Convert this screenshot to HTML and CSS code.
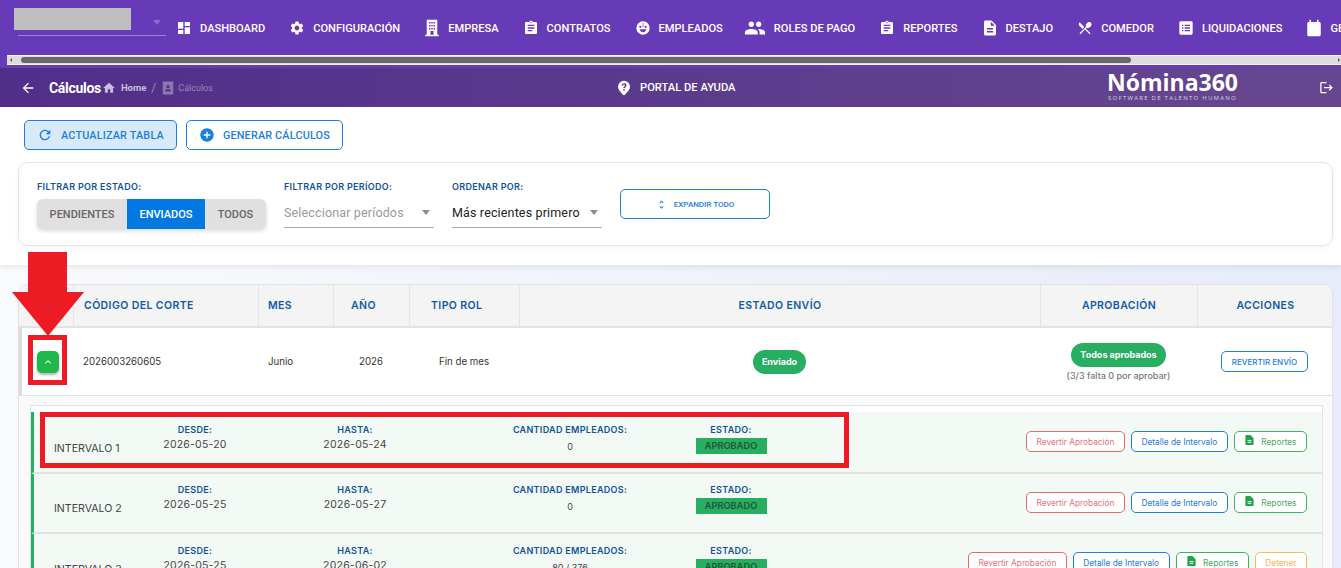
FILE: index.html
```html
<!DOCTYPE html>
<html lang="es">
<head>
<meta charset="UTF-8">
<title>Cálculos</title>
<link rel="stylesheet" href="styles.css">
</head>
<body>
<svg class="defs" width="0" height="0">
	<symbol id="i-dash" viewBox="0 0 24 24"><path d="M3 13h8V3H3v10zm0 8h8v-6H3v6zm10 0h8V11h-8v10zm0-18v6h8V3h-8z"/></symbol>
	<symbol id="i-cog" viewBox="0 0 24 24"><path d="M19.14 12.94c.04-.3.06-.61.06-.94 0-.32-.02-.64-.07-.94l2.03-1.58c.18-.14.23-.41.12-.61l-1.92-3.32c-.12-.22-.37-.29-.59-.22l-2.39.96c-.5-.38-1.03-.7-1.62-.94l-.36-2.54c-.04-.24-.24-.41-.48-.41h-3.84c-.24 0-.43.17-.47.41l-.36 2.54c-.59.24-1.13.57-1.62.94l-2.39-.96c-.22-.08-.47 0-.59.22L2.74 8.87c-.12.21-.08.47.12.61l2.03 1.58c-.05.3-.09.63-.09.94s.02.64.07.94l-2.03 1.58c-.18.14-.23.41-.12.61l1.92 3.32c.12.22.37.29.59.22l2.39-.96c.5.38 1.03.7 1.62.94l.36 2.54c.05.24.24.41.48.41h3.84c.24 0 .44-.17.47-.41l.36-2.54c.59-.24 1.13-.56 1.62-.94l2.39.96c.22.08.47 0 .59-.22l1.92-3.32c.12-.22.07-.47-.12-.61l-2.01-1.58zM12 15.6c-1.98 0-3.6-1.62-3.6-3.6s1.62-3.6 3.6-3.6 3.6 1.62 3.6 3.6-1.62 3.6-3.6 3.6z"/></symbol>
	<symbol id="i-building" viewBox="0 0 24 24"><path fill-rule="evenodd" d="M5 1h14v20h2v2H3v-2h2V1zm3 3v2h2V4H8zm3 0v2h2V4h-2zm3 0v2h2V4h-2zM8 8v2h2V8H8zm3 0v2h2V8h-2zm3 0v2h2V8h-2zM8 12v2h2v-2H8zm3 0v2h2v-2h-2zm3 0v2h2v-2h-2zm-4 4v5h4v-5h-4z"/></symbol>
	<symbol id="i-clip" viewBox="0 0 24 24"><path d="M19 3h-4.18C14.4 1.84 13.3 1 12 1s-2.4.84-2.82 2H5c-1.1 0-2 .9-2 2v14c0 1.1.9 2 2 2h14c1.1 0 2-.9 2-2V5c0-1.1-.9-2-2-2zm-7 0c.55 0 1 .45 1 1s-.45 1-1 1-1-.45-1-1 .45-1 1-1zm2 14H7v-2h7v2zm3-4H7v-2h10v2zm0-4H7V7h10v2z"/></symbol>
	<symbol id="i-face" viewBox="0 0 24 24"><path fill-rule="evenodd" d="M12 2a10 10 0 1 0 0 20 10 10 0 0 0 0-20zM8 8.500a1.700 1.700 0 1 1 0 3.400 1.700 1.700 0 0 1 0-3.400zm8 0a1.700 1.700 0 1 1 0 3.400 1.700 1.700 0 0 1 0-3.400zM12.500 4v7h-1V4h1zM7 14h10c-.6 2.600-2.700 4.500-5 4.500S7.600 16.600 7 14z"/></symbol>
	<symbol id="i-group" viewBox="0 0 24 24"><path d="M16 11c1.660 0 2.990-1.340 2.990-3S17.660 5 16 5c-1.660 0-3 1.340-3 3s1.340 3 3 3zm-8 0c1.660 0 2.990-1.340 2.990-3S9.660 5 8 5C6.340 5 5 6.340 5 8s1.340 3 3 3zm0 2c-2.330 0-7 1.170-7 3.500V19h14v-2.500c0-2.330-4.670-3.500-7-3.500zm8 0c-.29 0-.62.02-.97.05 1.160.84 1.970 1.970 1.970 3.450V19h6v-2.500c0-2.330-4.670-3.500-7-3.500z"/></symbol>
	<symbol id="i-file" viewBox="0 0 24 24"><path d="M14 2H6c-1.100 0-1.990.9-1.990 2L4 20c0 1.100.89 2 1.990 2H18c1.100 0 2-.9 2-2V8l-6-6zm2 16H8v-2h8v2zm0-4H8v-2h8v2zm-3-5V3.500L18.500 9H13z"/></symbol>
	<symbol id="i-food" viewBox="0 0 24 24"><path d="M8.100 13.340l2.830-2.830L3.910 3.500c-1.560 1.560-1.560 4.090 0 5.660l4.190 4.180zm6.780-1.810c1.530.71 3.680.21 5.270-1.380 1.910-1.910 2.280-4.650.81-6.120-1.460-1.460-4.200-1.100-6.120.81-1.590 1.590-2.090 3.740-1.380 5.270L3.700 19.870l1.410 1.410L12 14.410l6.880 6.880 1.410-1.410L13.410 13l1.470-1.470z"/></symbol>
	<symbol id="i-list" viewBox="0 0 24 24"><path fill-rule="evenodd" d="M4 2h16a2 2 0 0 1 2 2v16a2 2 0 0 1-2 2H4a2 2 0 0 1-2-2V4a2 2 0 0 1 2-2zm2 5v2h2V7H6zm4 0v2h8V7h-8zm-4 4v2h2v-2H6zm4 0v2h8v-2h-8zm-4 4v2h2v-2H6zm4 0v2h8v-2h-8z"/></symbol>
	<symbol id="i-cal" viewBox="0 0 24 24"><path d="M19 4h-1V1h-2v3H8V1H6v3H5c-1.100 0-2 .9-2 2v15c0 1.100.9 2 2 2h14c1.100 0 2-.9 2-2V6c0-1.100-.9-2-2-2z"/></symbol>
	<symbol id="i-back" viewBox="0 0 24 24"><path d="M20 11H7.830l5.590-5.590L12 4l-8 8 8 8 1.410-1.410L7.830 13H20v-2z"/></symbol>
	<symbol id="i-home" viewBox="0 0 24 24"><path d="M10 20v-6h4v6h5v-8h3L12 3 2 12h3v8z"/></symbol>
	<symbol id="i-badge" viewBox="0 0 24 24"><path fill-rule="evenodd" d="M4 1h16a1 1 0 0 1 1 1v20a1 1 0 0 1-1 1H4a1 1 0 0 1-1-1V2a1 1 0 0 1 1-1zm8 6a3 3 0 1 0 0 6 3 3 0 0 0 0-6zm-5 11h10v-1.500c0-1.700-3.300-2.500-5-2.500s-5 .8-5 2.500V18z"/></symbol>
	<symbol id="i-help" viewBox="0 0 24 24"><path fill-rule="evenodd" d="M12 1a9 9 0 0 0-9 9c0 6 9 13 9 13s9-7 9-13a9 9 0 0 0-9-9zm-3.500 7.500C8.700 6.500 10.200 5 12.200 5c2 0 3.500 1.300 3.500 3.100 0 2.300-2.600 2.500-2.600 4.400h-2.200c0-2.900 2.500-3 2.500-4.400 0-.7-.6-1.200-1.300-1.200-.8 0-1.400.6-1.500 1.600H8.500zM10.900 14h2.200v2.100h-2.200V14z"/></symbol>
	<symbol id="i-exit" viewBox="0 0 24 24"><path d="M17 7l-1.410 1.410L18.170 11H8v2h10.170l-2.580 2.580L17 17l5-5zM4 5h8V3H4c-1.100 0-2 .9-2 2v14c0 1.100.9 2 2 2h8v-2H4V5z"/></symbol>
	<symbol id="i-refresh" viewBox="0 0 24 24"><path d="M17.650 6.350C16.200 4.900 14.210 4 12 4c-4.420 0-7.990 3.580-7.990 8s3.570 8 7.990 8c3.730 0 6.840-2.550 7.730-6h-2.080c-.82 2.330-3.040 4-5.650 4-3.310 0-6-2.690-6-6s2.690-6 6-6c1.660 0 3.140.69 4.220 1.780L13 11h7V4l-2.350 2.350z"/></symbol>
	<symbol id="i-plus" viewBox="0 0 24 24"><path d="M12 2C6.480 2 2 6.480 2 12s4.480 10 10 10 10-4.480 10-10S17.520 2 12 2zm5 11h-4v4h-2v-4H7v-2h4V7h2v4h4v2z"/></symbol>
	<symbol id="i-unfold" viewBox="0 0 24 24"><path d="M12 5.830L15.170 9l1.410-1.410L12 3 7.410 7.590 8.830 9 12 5.830zm0 12.340L8.830 15l-1.410 1.410L12 21l4.590-4.590L15.170 15 12 18.170z"/></symbol>
	<symbol id="i-up" viewBox="0 0 24 24"><path d="M7.410 15.410L12 10.830l4.590 4.580L18 14l-6-6-6 6z"/></symbol>
	<symbol id="i-sheet" viewBox="0 0 24 24"><path fill-rule="evenodd" d="M14 1H5a2 2 0 0 0-2 2v18a2 2 0 0 0 2 2h14a2 2 0 0 0 2-2V8l-7-7zm-6 11h8v2H8v-2zm0 4h8v2H8v-2z"/></symbol>
</svg>

<!-- barra principal -->
<nav class="topnav">
	<div class="brand">
		<div class="brand-hide"></div>
		<div class="brand-line"></div>
		<span class="brand-arrow"></span>
	</div>
	<a class="nav-item"><svg class="ic"><use href="#i-dash"/></svg>DASHBOARD</a>
	<a class="nav-item"><svg class="ic"><use href="#i-cog"/></svg>CONFIGURACIÓN</a>
	<a class="nav-item"><svg class="ic tall"><use href="#i-building"/></svg>EMPRESA</a>
	<a class="nav-item"><svg class="ic"><use href="#i-clip"/></svg>CONTRATOS</a>
	<a class="nav-item"><svg class="ic"><use href="#i-face"/></svg>EMPLEADOS</a>
	<a class="nav-item"><svg class="ic wide"><use href="#i-group"/></svg>ROLES DE PAGO</a>
	<a class="nav-item"><svg class="ic"><use href="#i-clip"/></svg>REPORTES</a>
	<a class="nav-item"><svg class="ic tall"><use href="#i-file"/></svg>DESTAJO</a>
	<a class="nav-item"><svg class="ic"><use href="#i-food"/></svg>COMEDOR</a>
	<a class="nav-item"><svg class="ic"><use href="#i-list"/></svg>LIQUIDACIONES</a>
	<a class="nav-item"><svg class="ic tall"><use href="#i-cal"/></svg>GESTIÓN</a>
</nav>
<div class="nav-scroll">
	<div class="scroll-track">
		<span class="scroll-left"></span>
		<span class="scroll-thumb"></span>
		<span class="scroll-right"></span>
	</div>
</div>

<!-- encabezado de la pagina -->
<header class="pagehead">
	<div class="crumbs">
		<svg class="back"><use href="#i-back"/></svg>
		<span class="page-title">Cálculos</span>
		<svg class="crumb-ic"><use href="#i-home"/></svg>
		<span class="crumb-home">Home</span>
		<span class="crumb-sep">/</span>
		<svg class="crumb-ic dim"><use href="#i-badge"/></svg>
		<span class="crumb-now">Cálculos</span>
	</div>
	<div class="help"><svg class="ic"><use href="#i-help"/></svg>PORTAL DE AYUDA</div>
	<div class="logo">
		<div class="logo-name">Nómina360</div>
		<div class="logo-sub">SOFTWARE DE TALENTO HUMANO</div>
	</div>
	<svg class="exit"><use href="#i-exit"/></svg>
</header>

<section class="toolbar">
	<div class="tool-btns">
		<button class="btn-main on"><svg class="ic"><use href="#i-refresh"/></svg>ACTUALIZAR TABLA</button>
		<button class="btn-main"><svg class="ic"><use href="#i-plus"/></svg>GENERAR CÁLCULOS</button>
	</div>
	<div class="filters">
		<div class="f-group">
			<div class="f-label">FILTRAR POR ESTADO:</div>
			<div class="segs">
				<span class="seg s1">PENDIENTES</span>
				<span class="seg s2 active">ENVIADOS</span>
				<span class="seg s3">TODOS</span>
			</div>
		</div>
		<div class="f-group">
			<div class="f-label">FILTRAR POR PERÍODO:</div>
			<div class="sel muted">Seleccionar períodos<i class="caret"></i></div>
		</div>
		<div class="f-group">
			<div class="f-label">ORDENAR POR:</div>
			<div class="sel">Más recientes primero<i class="caret"></i></div>
		</div>
		<button class="btn-expand"><svg><use href="#i-unfold"/></svg>EXPANDIR TODO</button>
	</div>
</section>

<main class="content">
	<div class="card">
		<div class="t-grid t-head">
			<div></div>
			<div class="th p10">CÓDIGO DEL CORTE</div>
			<div class="th p9">MES</div>
			<div class="th p17">AÑO</div>
			<div class="th p21">TIPO ROL</div>
			<div class="th mid">ESTADO ENVÍO</div>
			<div class="th mid">APROBACIÓN</div>
			<div class="th mid">ACCIONES</div>
		</div>
		<div class="t-grid t-row">
			<div class="td mid"><button class="toggle"><svg><use href="#i-up"/></svg></button></div>
			<div class="td p10">2026003260605</div>
			<div class="td p10">Junio</div>
			<div class="td p26">2026</div>
			<div class="td p30">Fin de mes</div>
			<div class="td mid"><span class="pill">Enviado</span></div>
			<div class="td stack">
				<span class="pill">Todos aprobados</span>
				<small class="pill-note">(3/3 falta 0 por aprobar)</small>
			</div>
			<div class="td mid"><button class="btn-sm blue caps">REVERTIR ENVÍO</button></div>
		</div>
		<div class="detail">
			<div class="detail-box">
				<div class="iv-row r1">
					<div class="iv-name">INTERVALO 1</div>
					<div class="iv-col"><b>DESDE:</b><span class="date">2026-05-20</span></div>
					<div class="iv-col"><b>HASTA:</b><span class="date">2026-05-24</span></div>
					<div class="iv-col"><b>CANTIDAD EMPLEADOS:</b><span class="count">0</span></div>
					<div class="iv-col"><b>ESTADO:</b><span class="state">APROBADO</span></div>
					<div class="iv-actions">
						<button class="btn-sm red">Revertir Aprobación</button>
						<button class="btn-sm blue">Detalle de Intervalo</button>
						<button class="btn-sm green"><svg><use href="#i-sheet"/></svg>Reportes</button>
					</div>
				</div>
				<div class="iv-row r2">
					<div class="iv-name">INTERVALO 2</div>
					<div class="iv-col"><b>DESDE:</b><span class="date">2026-05-25</span></div>
					<div class="iv-col"><b>HASTA:</b><span class="date">2026-05-27</span></div>
					<div class="iv-col"><b>CANTIDAD EMPLEADOS:</b><span class="count">0</span></div>
					<div class="iv-col"><b>ESTADO:</b><span class="state">APROBADO</span></div>
					<div class="iv-actions">
						<button class="btn-sm red">Revertir Aprobación</button>
						<button class="btn-sm blue">Detalle de Intervalo</button>
						<button class="btn-sm green"><svg><use href="#i-sheet"/></svg>Reportes</button>
					</div>
				</div>
				<div class="iv-row r3">
					<div class="iv-name">INTERVALO 3</div>
					<div class="iv-col"><b>DESDE:</b><span class="date">2026-05-25</span></div>
					<div class="iv-col"><b>HASTA:</b><span class="date">2026-06-02</span></div>
					<div class="iv-col"><b>CANTIDAD EMPLEADOS:</b><span class="count">80 / 376</span></div>
					<div class="iv-col"><b>ESTADO:</b><span class="state">APROBADO</span></div>
					<div class="iv-actions">
						<button class="btn-sm red">Revertir Aprobación</button>
						<button class="btn-sm blue">Detalle de Intervalo</button>
						<button class="btn-sm green"><svg><use href="#i-sheet"/></svg>Reportes</button>
						<button class="btn-sm amber">Detener</button>
					</div>
				</div>
			</div>
		</div>
	</div>
</main>

<!-- anotaciones rojas encima de la captura -->
<svg class="mark-arrow" viewBox="0 0 72 84"><path d="M16 0h39v40h17L36 84 0 40h16z"/></svg>
<div class="mark-box small"></div>
<div class="mark-box large"></div>
</body>
</html>
```

FILE: styles.css
```css
*{
	margin: 0;
	padding: 0;
	box-sizing: border-box;
}
html,body{
	width: 1341px;
	height: 568px;
	overflow: hidden;
}
body{
	position: relative;
	font-family: Inter, "Liberation Sans", sans-serif;
	background: linear-gradient(90deg,#f8fafd,#e6ecf9);
	color: #333;
}
button{
	font-family: inherit;
	background: #fff;
	cursor: pointer;
}
.defs{
	position: absolute;
}
.ic{
	width: 16px;
	height: 16px;
	fill: currentColor;
	flex: none;
}

/* barra principal */
.topnav{
	height: 55px;
	padding-top: 1px;
	background: #673ab7;
	display: flex;
	align-items: center;
	color: #fff;
	overflow: hidden;
	white-space: nowrap;
	font-family: Roboto, sans-serif;
	font-size: 11.100px;
	font-weight: 500;
}
.brand{
	position: relative;
	flex: none;
	width: 176px;
	height: 54px;
	padding: 7px 10px 0 14px;
}
.brand-hide{
	width: 117px;
	height: 22px;
	background: #bfbfbf;
}
.brand-line{
	height: 1px;
	margin: 5px 0 0 4px;
	background: #9d84d2;
}
.brand-arrow{
	position: absolute;
	top: 19px;
	left: 153px;
	border: 4px solid transparent;
	border-top: 5px solid #8a6fc0;
	border-bottom: 0;
}
.nav-item{
	display: flex;
	align-items: center;
	gap: 8px;
	margin-right: 24px;
	flex: none;
}
.ic.tall{
	width: 18px;
	height: 18px;
	margin: 0 -1px;
}
.ic.wide{
	width: 22px;
	height: 22px;
	margin-left: -3px;
}
.nav-scroll{
	height: 13px;
	padding-left: 7px;
	background: #673ab7;
}
.scroll-track{
	height: 10px;
	background: #dcdcdc;
	border-top: 1px solid #f2f2f2;
	border-bottom: 1px solid #f2f2f2;
	display: flex;
	align-items: center;
	padding-left: 14px;
	position: relative;
}
.scroll-thumb{
	width: 1110px;
	height: 6px;
	background: #686868;
	border-radius: 3px;
}
.scroll-left,.scroll-right{
	position: absolute;
	top: 2px;
	border: 2.500px solid transparent;
}
.scroll-left{
	left: 3px;
	border-right-color: #555;
	border-left: 0;
}
.scroll-right{
	right: 1px;
	border-left-color: #555;
	border-right: 0;
}

/* encabezado */
.pagehead{
	height: 39px;
	background: linear-gradient(90deg,#502e8a,#66478f);
	color: #fff;
	position: relative;
	display: flex;
	align-items: center;
	padding-left: 20px;
	font-family: Roboto, sans-serif;
}
.crumbs{
	display: flex;
	align-items: center;
	width: 596px;
}
.back{
	width: 16px;
	height: 16px;
	fill: #fff;
	margin-right: 13px;
}
.page-title{
	font-size: 14px;
	font-weight: 700;
	letter-spacing: -.3px;
}
.crumb-ic{
	width: 14px;
	height: 14px;
	fill: #c9bedd;
	margin: 0 5px 0 1px;
}
.crumb-ic.dim{
	fill: #8d78ad;
	margin: 0 3px 0 0;
}
.crumb-home{
	font-size: 9.500px;
	font-weight: 700;
	color: #c9bedd;
}
.crumb-sep{
	font-size: 12px;
	color: #9a88b8;
	margin: 0 5px 0 5px;
}
.crumb-now{
	font-size: 9px;
	color: #9a88b8;
}
.help{
	display: flex;
	align-items: center;
	gap: 8px;
	font-size: 11.200px;
	font-weight: 500;
}
.logo{
	margin: -3px 0 0 369px;
	width: 136px;
	text-align: center;
	font-family: "Open Sans", sans-serif;
}
.logo-name{
	font-size: 23px;
	font-weight: 700;
	line-height: 22px;
}
.logo-sub{
	font-size: 6px;
	line-height: 7px;
	margin-top: 2px;
	letter-spacing: 1.250px;
	color: #d8d0e6;
	white-space: nowrap;
}
.exit{
	width: 15px;
	height: 15px;
	fill: #fff;
	margin-left: 78px;
}

/* botones y filtros */
.toolbar{
	height: 158px;
	background: #fff;
	padding: 13px 8px 0 18px;
	box-shadow: 0 2px 6px rgba(0,0,0,.08);
}
.tool-btns{
	display: flex;
	gap: 9px;
	padding-left: 6px;
	margin-bottom: 12px;
}
.btn-main{
	height: 30px;
	display: flex;
	align-items: center;
	gap: 8px;
	border: 1px solid #1a80dc;
	border-radius: 5px;
	padding: 0 12px;
	color: #1a80dc;
	font-size: 10.800px;
	font-weight: 500;
	font-family: Roboto, sans-serif;
	letter-spacing: .2px;
}
.btn-main.on{
	background: #d8e9fa;
}
.filters{
	height: 84px;
	border: 1px solid #e4e4e4;
	border-radius: 10px;
	padding: 18px 18px 0;
	display: flex;
	gap: 18px;
	box-shadow: 0 2px 6px rgba(0,0,0,.04);
}
.f-label{
	font-size: 9px;
	font-weight: 600;
	letter-spacing: .3px;
	color: #0f5299;
	line-height: 12px;
	margin-bottom: 6px;
	white-space: nowrap;
}
.segs{
	display: flex;
	width: 229px;
	height: 30px;
	border-radius: 6px;
	overflow: hidden;
	background: #e0e0e0;
	box-shadow: 0 2px 4px rgba(0,0,0,.15);
	font-family: Roboto, sans-serif;
	font-size: 11px;
	font-weight: 500;
	color: #666;
}
.seg{
	display: flex;
	align-items: center;
	justify-content: center;
}
.s1{
	width: 90px;
}
.s2{
	width: 78px;
}
.s3{
	width: 61px;
}
.seg.active{
	background: #0179e0;
	color: #fff;
}
.sel{
	width: 150px;
	height: 29px;
	padding-bottom: 2px;
	border-bottom: 1px solid #aaa;
	display: flex;
	align-items: center;
	justify-content: space-between;
	padding-right: 4px;
	font-family: Roboto, sans-serif;
	font-size: 12.500px;
	letter-spacing: .15px;
	color: #222;
	white-space: nowrap;
}
.sel.muted{
	color: #9a9a9a;
}
.caret{
	border: 4.500px solid transparent;
	border-top: 5px solid #8c8c8c;
	border-bottom: 0;
}
.btn-expand{
	width: 150px;
	height: 30px;
	margin-top: 8px;
	border: 1px solid #1a80dc;
	border-radius: 5px;
	color: #1a80dc;
	display: flex;
	align-items: center;
	justify-content: center;
	gap: 7px;
	font-family: Roboto, sans-serif;
	font-size: 8px;
	font-weight: 500;
}
.btn-expand svg{
	width: 11px;
	height: 11px;
	fill: #1a80dc;
}

/* tabla */
.content{
	padding: 19px 8px 0 18px;
}
.card{
	background: #fff;
	border: 1px solid #e2e2e2;
	border-radius: 10px 10px 0 0;
	overflow: hidden;
	position: relative;
}
.t-grid{
	display: grid;
	grid-template-columns: 55px 185px 75px 76px 110px 521px 157px 135px;
}
.t-head{
	height: 43px;
	background: #f4f4f4;
	border-bottom: 2px solid #e2e2e2;
}
.t-head > div{
	border-right: 1px solid #e4e4e4;
}
.t-head > div:last-child{
	border-right: 0;
}
.th{
	display: flex;
	align-items: center;
	font-size: 10.500px;
	font-weight: 600;
	letter-spacing: .4px;
	color: #0f5aa6;
}
.t-row{
	height: 68px;
	grid-template-columns: 51px 185px 75px 76px 110px 521px 157px 135px;
	border-left: 3px solid #dcdcdc;
	border-bottom: 1px solid #e2e2e2;
}
.td{
	display: flex;
	align-items: center;
	font-size: 9.700px;
	color: #333;
}
.mid{
	justify-content: center;
}
.p9{
	padding-left: 9px;
}
.p10{
	padding-left: 10px;
}
.p17{
	padding-left: 17px;
}
.p21{
	padding-left: 21px;
}
.p26{
	padding-left: 26px;
}
.p30{
	padding-left: 30px;
}
.toggle{
	width: 22px;
	height: 22px;
	border: 0;
	border-radius: 5px;
	background: #1fb84c;
	box-shadow: 0 2px 3px rgba(0,0,0,.3);
	display: flex;
	align-items: center;
	justify-content: center;
}
.toggle svg{
	width: 12px;
	height: 12px;
	fill: #fff;
}
.pill{
	background: #28ae60;
	color: #fff;
	font-size: 9px;
	font-weight: 700;
	padding: 0 9px;
	height: 24px;
	line-height: 24px;
	border-radius: 12px;
	white-space: nowrap;
}
.stack{
	flex-direction: column;
	justify-content: center;
	gap: 3px;
	padding-top: 1px;
}
.pill-note{
	font-size: 9px;
	font-weight: 500;
	color: #777;
	white-space: nowrap;
}
.btn-sm{
	height: 21px;
	border-radius: 5px;
	font-size: 8.300px;
	padding: 0 9.500px;
	white-space: nowrap;
	display: flex;
	align-items: center;
	gap: 6px;
	border: 1px solid;
	flex: none;
}
.btn-sm svg{
	width: 11px;
	height: 14px;
	fill: #1ea44a;
	margin-top: -3px;
}
.caps{
	font-size: 8px;
	font-weight: 500;
}
.btn-sm.blue{
	color: #1f78e0;
	border-color: #1f7fe0;
}
.btn-sm.red{
	color: #e8707a;
	border-color: #e46a6a;
}
.btn-sm.green{
	color: #48a860;
	border-color: #3cb45c;
}
.btn-sm.amber{
	color: #f2b84a;
	border-color: #f4c04e;
}

/* intervalos */
.detail{
	background: #fafafa;
	padding: 9px 9px 0 11px;
}
.detail-box{
	border: 1px solid #e2e2e2;
	border-bottom: 0;
	padding-top: 6px;
	background: #fff;
}
.iv-row{
	display: grid;
	grid-template-columns: 101px 120px 200px 230px 92px 1fr;
	background: #f3f9f5;
	border-left: 3px solid #28ae60;
	padding-right: 15px;
	border-bottom: 2px solid #e0e2e0;
}
.r1{
	height: 62px;
	padding-top: 12px;
}
.r2{
	height: 60px;
	padding-top: 10px;
}
.r2 .iv-actions{
	padding-top: 8px;
}
.r3{
	height: 60px;
	padding-top: 11px;
}
.iv-name{
	padding: 18px 0 0 20px;
	font-size: 10.600px;
	line-height: 14px;
	color: #444;
	white-space: nowrap;
}
.iv-col{
	display: flex;
	flex-direction: column;
	align-items: center;
}
.iv-col b{
	font-size: 9px;
	line-height: 11px;
	font-weight: 600;
	letter-spacing: .3px;
	color: #0f5299;
	white-space: nowrap;
}
.date{
	font-size: 10.500px;
	line-height: 14px;
	margin-top: 3px;
	letter-spacing: .2px;
	color: #444;
}
.count{
	font-size: 9px;
	line-height: 14px;
	margin-top: 5px;
	color: #444;
}
.state{
	width: 71px;
	height: 16px;
	margin-top: 3px;
	background: #28ae60;
	color: #24553a;
	font-size: 9.300px;
	font-weight: 600;
	line-height: 16px;
	text-align: center;
}
.iv-actions{
	display: flex;
	justify-content: flex-end;
	gap: 6px;
	padding-top: 7px;
}

/* anotaciones */
.mark-arrow{
	position: absolute;
	top: 252px;
	left: 12px;
	width: 72px;
	height: 84px;
	fill: #ed1c24;
}
.mark-box{
	position: absolute;
	border: 5px solid #ed1c24;
}
.mark-box.small{
	top: 335px;
	left: 28px;
	width: 39px;
	height: 50px;
}
.mark-box.large{
	top: 412px;
	left: 40px;
	width: 809px;
	height: 56px;
}
```
